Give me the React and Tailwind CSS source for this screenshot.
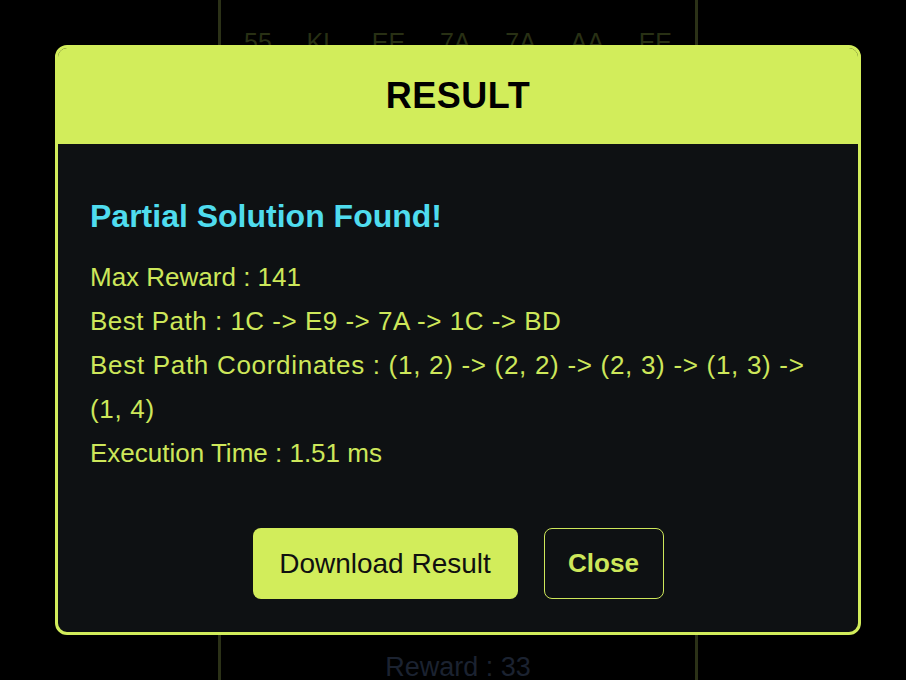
export default function App() {
    const cells = ['55', 'KL', 'EE', '7A', '7A', 'AA', 'EE']

    return (
        <div className="relative h-[680px] w-full overflow-hidden bg-black font-['Liberation_Sans',sans-serif]">
            {/* Background board */}
            <div className="flex h-full justify-center pl-[10px]">
                <div className="flex h-full w-[480px] flex-col items-center justify-between border-x-[3px] border-[#2b3117]">
                    <div className="flex w-full justify-between px-[23px] pt-[24px] text-[25px] text-[#283014]">
                        {cells.map((c, i) => (
                            <span key={i}>{c}</span>
                        ))}
                    </div>
                    <div className="-mb-[7px] text-[27px] text-[#1b2230]">Reward : 33</div>
                </div>
            </div>

            {/* Modal */}
            <div className="absolute inset-0 flex items-center justify-center pl-[10px]">
                <div className="w-[806px] overflow-hidden rounded-[12px] border-[3px] border-[#d2ed5b] bg-[#0e1113]">
                    <div className="flex h-[96px] items-center justify-center bg-[#d2ed5b]">
                        <h1 className="text-[36px] font-bold tracking-[0.5px] text-black">RESULT</h1>
                    </div>
                    <div className="px-[32px] pb-[33px] pt-[53px]">
                        <h2 className="text-[32px] font-semibold leading-[38px] text-[#4fdcee]">Partial Solution Found!</h2>
                        <div className="mt-[20px] text-[26px] leading-[44px] text-[#cde75a]">
                            <p>Max Reward : 141</p>
                            <p className="tracking-[0.5px]">Best Path : 1C -&gt; E9 -&gt; 7A -&gt; 1C -&gt; BD</p>
                            <p className="tracking-[0.7px]">
                                Best Path Coordinates : (1, 2) -&gt; (2, 2) -&gt; (2, 3) -&gt; (1, 3) -&gt; (1, 4)
                            </p>
                            <p>Execution Time : 1.51 ms</p>
                        </div>
                        <div className="mt-[53px] flex justify-center gap-[26px]">
                            <button className="h-[71px] w-[265px] rounded-[8px] bg-[#d2ed5b] text-[28px] text-[#101010]">
                                Download Result
                            </button>
                            <button className="h-[71px] w-[120px] rounded-[8px] border border-[#cde75a] text-[26px] font-semibold text-[#cde75a]">
                                Close
                            </button>
                        </div>
                    </div>
                </div>
            </div>
        </div>
    )
}
